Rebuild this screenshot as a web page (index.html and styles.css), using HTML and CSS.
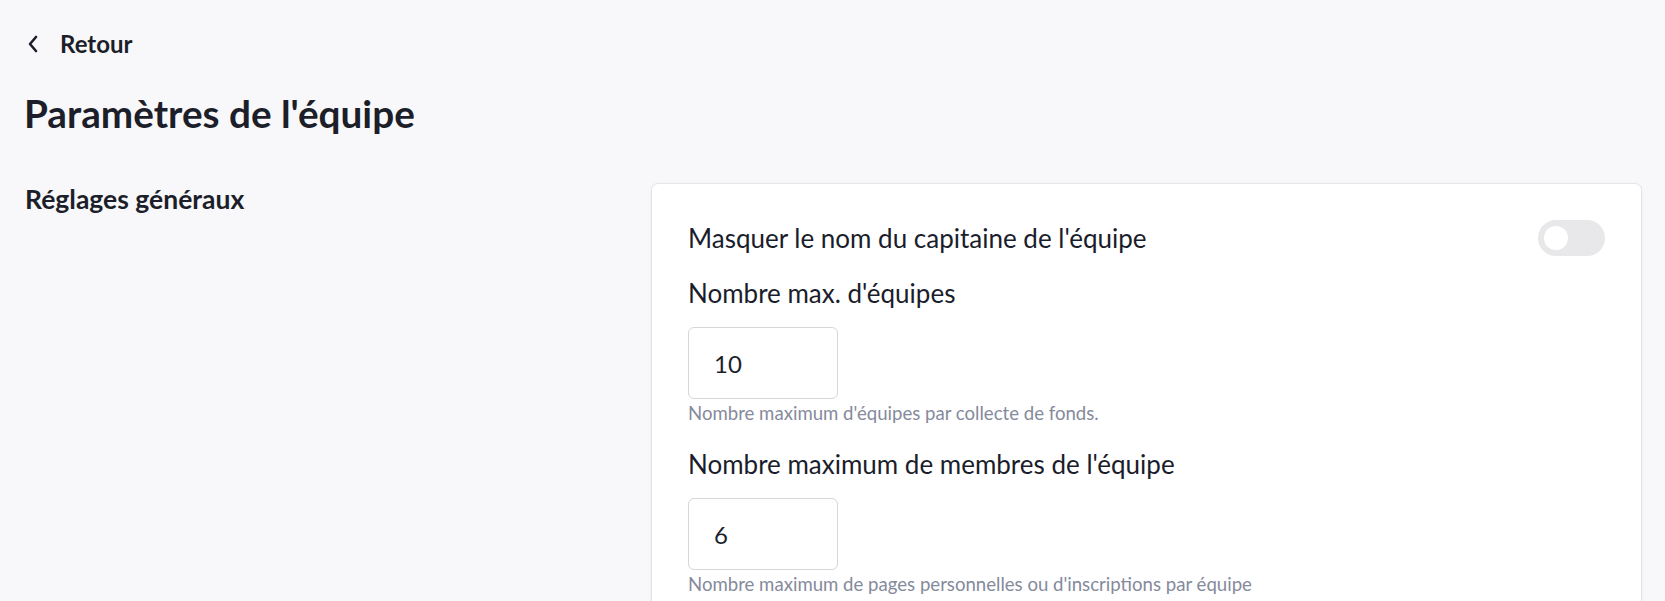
FILE: index.html
```html
<!DOCTYPE html>
<html lang="fr">
<head>
<meta charset="utf-8">
<title>Paramètres de l'équipe</title>
<link rel="stylesheet" href="styles.css">
</head>
<body>
<div class="page">
  <a class="back" href="#">
    <svg class="back-icon" width="12" height="18" viewBox="0 0 12 18" aria-hidden="true">
      <path d="M9 2 L3 9 L9 16" fill="none" stroke="#1c1f2a" stroke-width="2.6" stroke-linecap="round" stroke-linejoin="round"/>
    </svg>
    <span>Retour</span>
  </a>
  <h1 class="title">Paramètres de l'équipe</h1>
  <div class="section">
    <h2 class="section-title">Réglages généraux</h2>
    <div class="card">
      <div class="toggle-row">
        <span class="field-label">Masquer le nom du capitaine de l'équipe</span>
        <span class="toggle"><span class="knob"></span></span>
      </div>
      <div class="field">
        <label class="field-label">Nombre max. d'équipes</label>
        <div class="input">10</div>
        <p class="help">Nombre maximum d'équipes par collecte de fonds.</p>
      </div>
      <div class="field">
        <label class="field-label">Nombre maximum de membres de l'équipe</label>
        <div class="input">6</div>
        <p class="help">Nombre maximum de pages personnelles ou d'inscriptions par équipe</p>
      </div>
    </div>
  </div>
</div>
</body>
</html>
```

FILE: styles.css
```css
html, body {
  margin: 0;
  padding: 0;
  background: #f8f8fa;
  font-family: Lato, "Noto Sans", sans-serif;
  color: #1c1f2a;
}
.page {
  padding: 30px 24px 0 24px;
}
.back {
  display: flex;
  align-items: center;
  gap: 21px;
  color: #1c1f2a;
  text-decoration: none;
  font-size: 24px;
  font-weight: 700;
  line-height: 28px;
  padding-left: 3px;
}
.back-icon {
  display: block;
}
.title {
  margin: 31px 0 0 0;
  font-size: 38.7px;
  font-weight: 700;
  line-height: 48px;
}
.section {
  display: grid;
  grid-template-columns: 604px 1fr;
  gap: 24px;
  margin-top: 47px;
}
.section-title {
  margin: 0 0 0 1px;
  font-size: 26.5px;
  font-weight: 700;
  line-height: 30px;
}
.card {
  background: #fff;
  border-radius: 6px;
  box-shadow: 0 0 0 1px rgba(20, 20, 60, 0.06), 0 1px 4px rgba(20, 20, 60, 0.08);
  padding: 36px 36px 24px 36px;
  min-height: 500px;
}
.toggle-row {
  display: flex;
  align-items: center;
  justify-content: space-between;
  height: 36px;
}
.field-label {
  display: block;
  font-size: 26px;
  font-weight: 400;
  line-height: 32px;
  color: #1a1d2b;
}
.toggle {
  position: relative;
  width: 67px;
  height: 36px;
  border-radius: 18px;
  background: #e8e8eb;
  flex: none;
}
.knob {
  position: absolute;
  left: 6px;
  top: 6px;
  width: 24px;
  height: 24px;
  border-radius: 50%;
  background: #fff;
}
.field {
  margin-top: 21px;
}
.field + .field {
  margin-top: 24px;
}
.input {
  box-sizing: border-box;
  width: 150px;
  height: 72px;
  margin-top: 18px;
  border: 1px solid #d6d6db;
  border-radius: 6px;
  background: #fff;
  padding-left: 25px;
  display: flex;
  align-items: center;
  font-size: 24px;
  color: #1c1f2a;
}
.help {
  margin: 3px 0 0 0;
  font-size: 18.6px;
  line-height: 22px;
  color: #858a9c;
}
```
